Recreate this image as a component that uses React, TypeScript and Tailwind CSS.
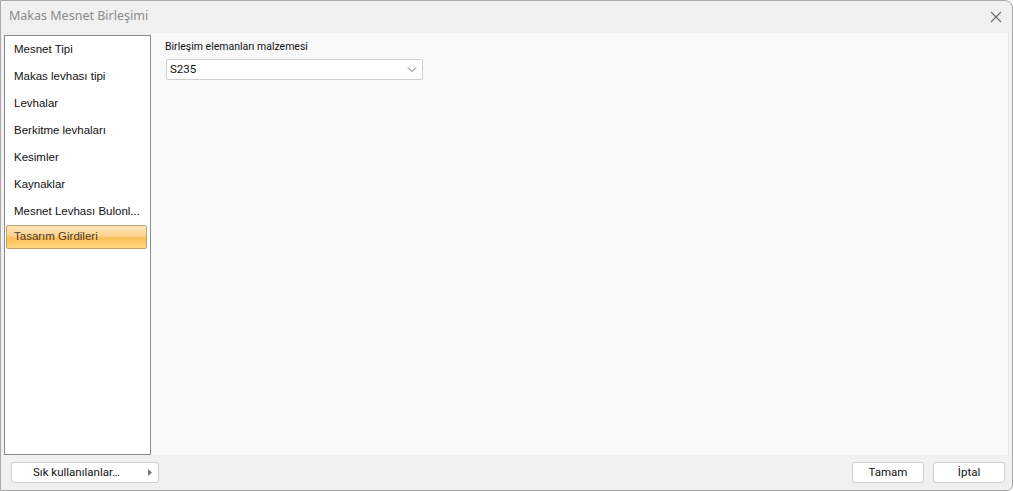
import React from "react";

const items = [
  "Mesnet Tipi",
  "Makas levhası tipi",
  "Levhalar",
  "Berkitme levhaları",
  "Kesimler",
  "Kaynaklar",
  "Mesnet Levhası Bulonl...",
  "Tasarım Girdileri",
];

const ui = { fontFamily: 'Roboto, "Noto Sans", sans-serif' };

export default function App() {
  return (
    <div
      className="w-[1013px] h-[491px] bg-[#f0f0f0] border border-[#a8a8a8] rounded-tr-[8px] rounded-br-[6px] flex flex-col overflow-hidden"
      style={{ fontFamily: '"Noto Sans", sans-serif' }}
    >
      {/* title bar */}
      <div className="h-[31px] flex items-center justify-between pl-[8px] pr-[9px] shrink-0">
        <span className="text-[12.5px] text-[#8a8a8a]">Makas Mesnet Birleşimi</span>
        <svg width="12" height="12" viewBox="0 0 12 12" className="mr-[1px]">
          <path d="M1 1 L11 11 M11 1 L1 11" stroke="#6a6a6a" strokeWidth="1.1" />
        </svg>
      </div>
      {/* body */}
      <div className="flex flex-1 min-h-0 pl-[3px] pr-[3px]">
        <div className="w-[147px] mt-[3px] bg-white border border-[#8d8d8d] flex flex-col pl-[1px] pr-[3px]">
          {items.map((t, i) => {
            const sel = i === items.length - 1;
            return (
              <div
                key={t}
                className={
                  "flex items-center whitespace-nowrap " +
                  (sel
                    ? "h-[24px] pl-[7px] border border-[#c2a36a] rounded-[2px] bg-[linear-gradient(to_bottom,#fde4bb_0%,#fcd38e_45%,#fbbf55_55%,#fdd77e_100%)] text-[#4b3b2a]"
                    : "h-[27px] pl-[8px] text-[#111]")
                }
                style={{ fontFamily: '"Liberation Sans", sans-serif', fontSize: "11.5px" }}
              >
                {t}
              </div>
            );
          })}
        </div>
        <div className="flex-1 bg-[#f9f9f9] mt-[1px] border-r border-[#e6e6e6] pl-[14px] pt-[6px]" style={ui}>
          <div className="text-[10.5px] text-[#111] leading-[16px]">Birleşim elemanları malzemesi</div>
          <div className="mt-[4px] ml-[1px] w-[257px] h-[21px] bg-white border border-[#cfcfcf] rounded-[2px] flex items-center justify-between pl-[3px] pr-[5px]">
            <span className="text-[11.5px] text-[#111]">S235</span>
            <svg width="10" height="6" viewBox="0 0 10 6">
              <path d="M1 0.5 L5 4.5 L9 0.5" fill="none" stroke="#6a6a6a" strokeWidth="1" />
            </svg>
          </div>
        </div>
      </div>
      {/* footer */}
      <div className="h-[35px] shrink-0 flex items-center justify-between pl-[10px] pr-[7px]" style={ui}>
        <div className="w-[148px] h-[21px] bg-white border border-[#cfcfcf] rounded-[3px] flex items-center justify-between pl-[21px] pr-[5px]">
          <span className="text-[11.5px] text-[#111]">Sık kullanılanlar…</span>
          <svg width="5" height="7" viewBox="0 0 5 7">
            <path d="M0 0 L4 3.5 L0 7 Z" fill="#777" />
          </svg>
        </div>
        <div className="flex gap-[9px]">
          <div className="w-[72px] h-[21px] bg-white border border-[#cfcfcf] rounded-[3px] flex items-center justify-center text-[11.5px] text-[#111]">Tamam</div>
          <div className="w-[72px] h-[21px] bg-white border border-[#cfcfcf] rounded-[3px] flex items-center justify-center text-[11.5px] text-[#111]">İptal</div>
        </div>
      </div>
    </div>
  );
}
